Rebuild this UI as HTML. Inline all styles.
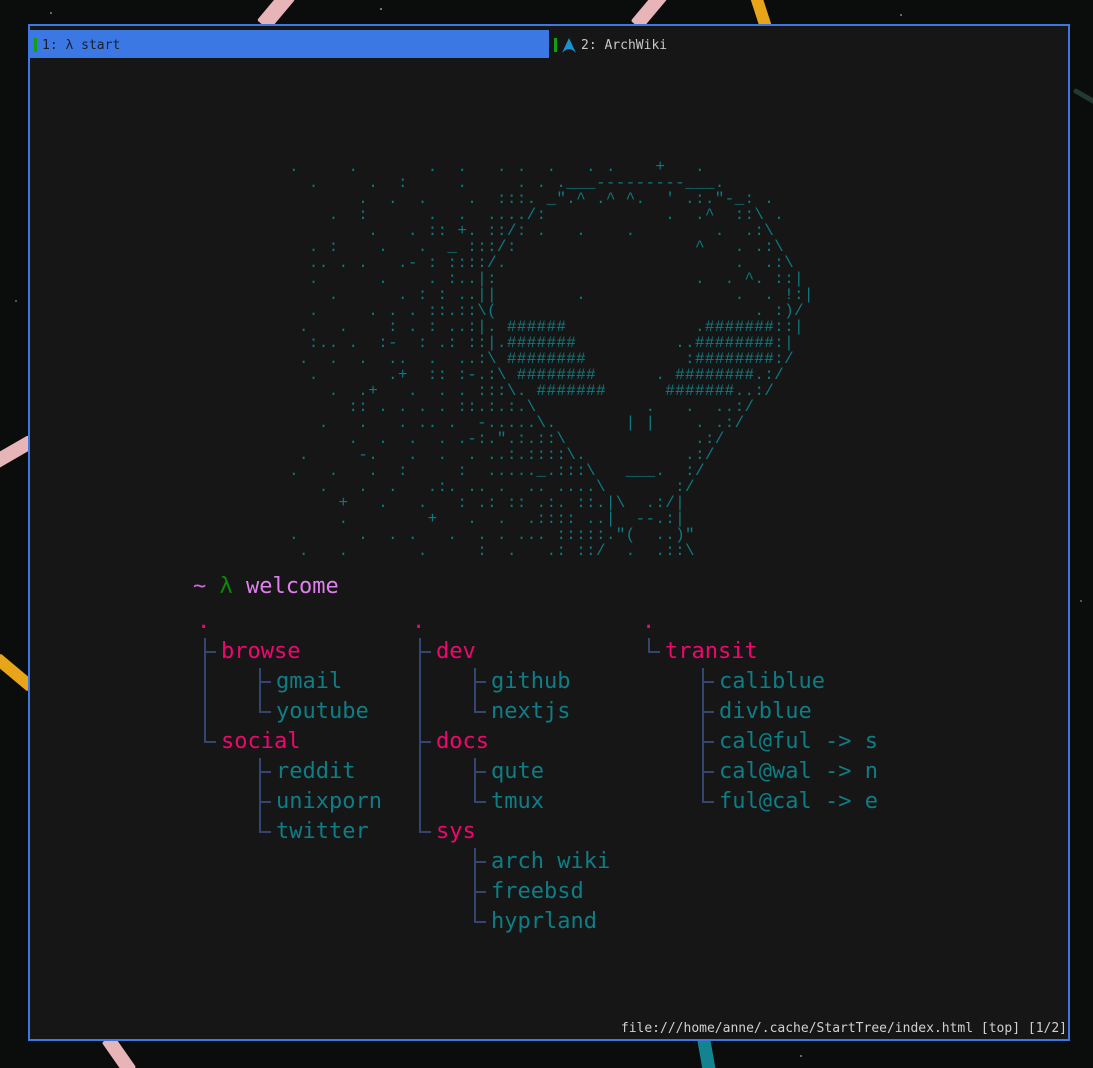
<!DOCTYPE html>
<html><head><meta charset="utf-8"><style>
*{margin:0;padding:0;box-sizing:border-box}
html,body{width:1093px;height:1068px;overflow:hidden;background:#0a0d0c;position:relative}
.st{position:absolute;border-radius:2px}
#win{position:absolute;left:28px;top:24px;width:1042px;height:1017px;border:2px solid #3b78e3;background:#161616;overflow:hidden}
.tab{position:absolute;top:6px;height:28px;font:13px "DejaVu Sans Mono","Liberation Mono",monospace;line-height:28px}
pre{position:absolute;left:259px;top:133px;font:16px/16px "Liberation Mono",monospace;letter-spacing:0.3px;color:#0d7a80;white-space:pre}
.t{position:absolute;font:22px/30px "DejaVu Sans Mono","Liberation Mono",monospace;white-space:pre}
.p{color:#f0066e}.c{color:#0e7d85}
.v{position:absolute;width:2px;background:#364472}
.h{position:absolute;height:2px;background:#364472}
#tree{position:absolute;left:0;top:2px;width:1093px;height:1000px}
</style></head><body>
<div class="st" style="left:268px;top:-10px;width:16px;height:40px;background:#e7b4b8;transform:rotate(40deg)"></div>
<div class="st" style="left:642px;top:-10px;width:14px;height:40px;background:#e7b4b8;transform:rotate(40deg)"></div>
<div class="st" style="left:755px;top:-8px;width:12px;height:40px;background:#e8a51a;transform:rotate(-18deg)"></div>
<div class="st" style="left:5px;top:430px;width:14px;height:45px;background:#e7b4b8;transform:rotate(60deg)"></div>
<div class="st" style="left:8px;top:650px;width:12px;height:45px;background:#e8a51a;transform:rotate(-50deg)"></div>
<div class="st" style="left:112px;top:1035px;width:14px;height:40px;background:#e7b4b8;transform:rotate(-35deg)"></div>
<div class="st" style="left:700px;top:1035px;width:13px;height:40px;background:#12838f;transform:rotate(-10deg)"></div>
<div class="st" style="left:1072px;top:95px;width:30px;height:5px;background:#233a33;transform:rotate(30deg)"></div>
<div style="position:absolute;left:50px;top:12px;width:2px;height:2px;background:#666"></div>
<div style="position:absolute;left:380px;top:8px;width:2px;height:2px;background:#777"></div>
<div style="position:absolute;left:900px;top:14px;width:2px;height:2px;background:#666"></div>
<div style="position:absolute;left:15px;top:300px;width:2px;height:2px;background:#555"></div>
<div style="position:absolute;left:1080px;top:600px;width:2px;height:2px;background:#555"></div>
<div style="position:absolute;left:800px;top:1055px;width:2px;height:2px;background:#666"></div>
<div id="win">
<div style="position:absolute;left:0;top:4px;width:519px;height:28px;background:#3b78e3"></div>
<div style="position:absolute;left:4px;top:12px;width:3px;height:14px;background:#11a011"></div>
<div class="tab" style="left:12px;color:#1b1f2e">1: λ start</div>
<div style="position:absolute;left:524px;top:12px;width:3px;height:14px;background:#11a011"></div>
<svg style="position:absolute;left:532px;top:12px" width="14" height="15" viewBox="0 0 14 15"><path d="M7 0 L14 15 Q10 11 7 11 Q4 11 0 15 Z" fill="#1793d1"/></svg>
<div class="tab" style="left:551px;color:#c8c8c8">2: ArchWiki</div>
<pre>.     .       .  .   . .  .   . .    +   .
  .     .  :     .     . . .___---------___.
       .  .  .    .  :::. _".^ .^ ^.  ' .:."-_: .
    .  :      .  .  ..../:            .  .^  ::\ .
        .   . :: +. ::/: .   .    .        .  .:\
  . :    .   .  _ :::/:                  ^   . .:\
  .. . .   .- : ::::/.                       .  .:\
  .      .    . :..|:                    .  . ^. ::|
    .      . : : ..||        .               .  . !:|
  .     . . . ::.::\(                          . :)/
 .   .    : . : ..:|. ######             .#######::|
  :.. .  :-  : .: ::|.#######          ..########:|
 .  .  .  ..  .  ..:\ ########          :########:/
  .       .+  :: :-.:\ ########      . ########.:/
    .  .+   .  . . :::\. #######      #######..:/
      :: . . . . ::.:.:.\           .   .  ..:/
   .   .   . .. .  -.....\.       | |    . .:/
      .  .  .  . .-:.".:.::\             .:/
 .     -.   .  .  . ..:.::::\.          .:/
.   .   .  :     :  ....._.:::\   ___.  :/
   .   .  .   .:. .. .  .. ....\       :/
     +   .   .   : .: :: .:. ::.|\  .:/|
     .        +   .  .  .:::: ..|  --.:|
.      .  . .   .  . . ... :::::."(  ..)"
 .   .       .     :  .   .: ::/  .  .::\</pre>
</div>
<div id="tree">
<div class="t" style="left:193px;top:570px"><span style="color:#c86fd6">~</span> <span style="color:#0b8a0b">λ</span> <span style="color:#e07ff0">welcome</span></div>
<div class="t p" style="left:197px;top:605px">.</div>
<div class="t p" style="left:412px;top:605px">.</div>
<div class="t p" style="left:642px;top:605px">.</div>
<div class="v" style="left:204px;top:636px;height:105px"></div>
<div class="h" style="left:204px;top:649px;width:12px"></div>
<div class="h" style="left:204px;top:739px;width:12px"></div>
<div class="t p" style="left:221px;top:635px">browse</div>
<div class="v" style="left:259px;top:666px;height:45px"></div>
<div class="h" style="left:259px;top:679px;width:12px"></div>
<div class="h" style="left:259px;top:709px;width:12px"></div>
<div class="t c" style="left:276px;top:665px">gmail</div>
<div class="t c" style="left:276px;top:695px">youtube</div>
<div class="t p" style="left:221px;top:725px">social</div>
<div class="v" style="left:259px;top:756px;height:75px"></div>
<div class="h" style="left:259px;top:769px;width:12px"></div>
<div class="h" style="left:259px;top:799px;width:12px"></div>
<div class="h" style="left:259px;top:829px;width:12px"></div>
<div class="t c" style="left:276px;top:755px">reddit</div>
<div class="t c" style="left:276px;top:785px">unixporn</div>
<div class="t c" style="left:276px;top:815px">twitter</div>
<div class="v" style="left:419px;top:636px;height:195px"></div>
<div class="h" style="left:419px;top:649px;width:12px"></div>
<div class="h" style="left:419px;top:739px;width:12px"></div>
<div class="h" style="left:419px;top:829px;width:12px"></div>
<div class="t p" style="left:436px;top:635px">dev</div>
<div class="t p" style="left:436px;top:725px">docs</div>
<div class="t p" style="left:436px;top:815px">sys</div>
<div class="v" style="left:474px;top:666px;height:45px"></div>
<div class="h" style="left:474px;top:679px;width:12px"></div>
<div class="h" style="left:474px;top:709px;width:12px"></div>
<div class="v" style="left:474px;top:756px;height:45px"></div>
<div class="h" style="left:474px;top:769px;width:12px"></div>
<div class="h" style="left:474px;top:799px;width:12px"></div>
<div class="v" style="left:474px;top:846px;height:75px"></div>
<div class="h" style="left:474px;top:859px;width:12px"></div>
<div class="h" style="left:474px;top:889px;width:12px"></div>
<div class="h" style="left:474px;top:919px;width:12px"></div>
<div class="t c" style="left:491px;top:665px">github</div>
<div class="t c" style="left:491px;top:695px">nextjs</div>
<div class="t c" style="left:491px;top:755px">qute</div>
<div class="t c" style="left:491px;top:785px">tmux</div>
<div class="t c" style="left:491px;top:845px">arch wiki</div>
<div class="t c" style="left:491px;top:875px">freebsd</div>
<div class="t c" style="left:491px;top:905px">hyprland</div>
<div class="v" style="left:648px;top:636px;height:15px"></div>
<div class="h" style="left:648px;top:649px;width:12px"></div>
<div class="t p" style="left:665px;top:635px">transit</div>
<div class="v" style="left:702px;top:666px;height:135px"></div>
<div class="h" style="left:702px;top:679px;width:12px"></div>
<div class="h" style="left:702px;top:709px;width:12px"></div>
<div class="h" style="left:702px;top:739px;width:12px"></div>
<div class="h" style="left:702px;top:769px;width:12px"></div>
<div class="h" style="left:702px;top:799px;width:12px"></div>
<div class="t c" style="left:719px;top:665px">caliblue</div>
<div class="t c" style="left:719px;top:695px">divblue</div>
<div class="t c" style="left:719px;top:725px">cal@ful -&gt; s</div>
<div class="t c" style="left:719px;top:755px">cal@wal -&gt; n</div>
<div class="t c" style="left:719px;top:785px">ful@cal -&gt; e</div>
</div>
<div style="position:absolute;right:26px;top:1021px;font:13px/16px 'DejaVu Sans Mono','Liberation Mono',monospace;color:#d0d0d0;white-space:pre">file:///home/anne/.cache/StartTree/index.html [top] [1/2]</div>
</body></html>
